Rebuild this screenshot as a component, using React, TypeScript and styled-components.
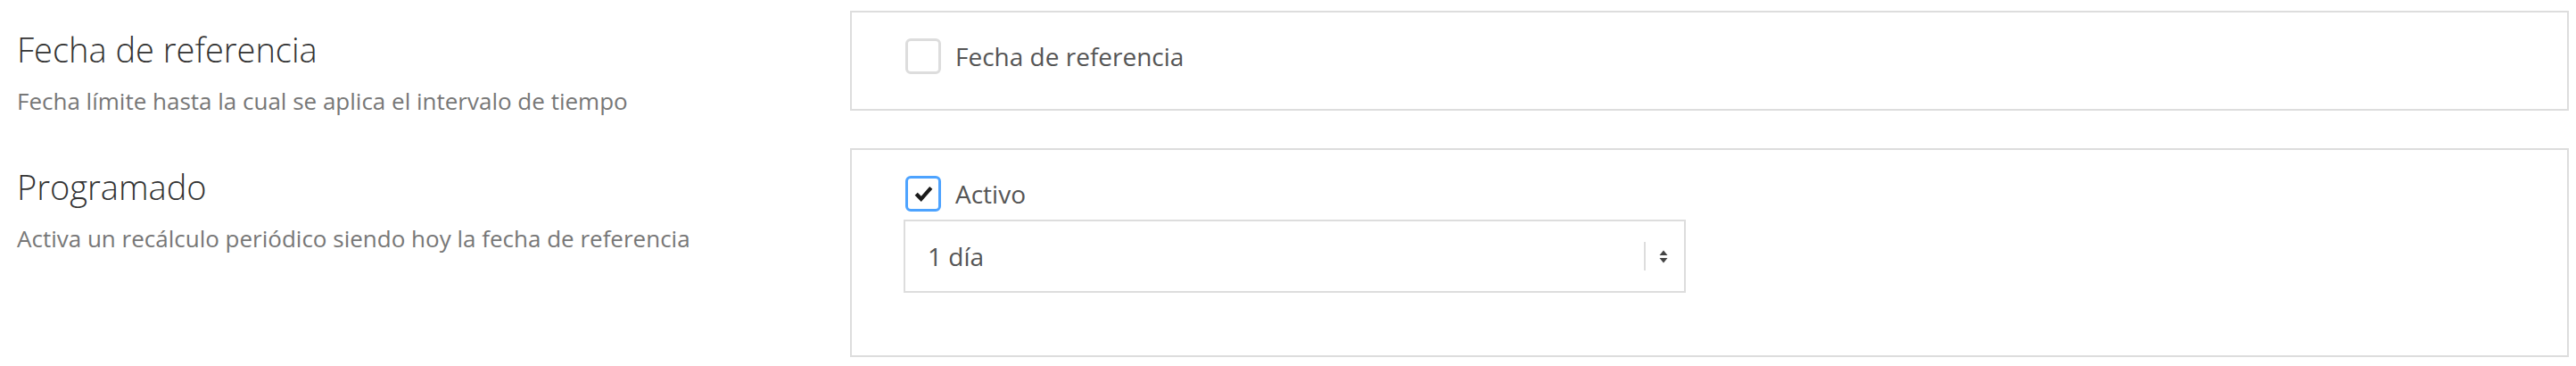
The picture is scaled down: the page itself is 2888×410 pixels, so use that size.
import React from "react";
import styled, { createGlobalStyle } from "styled-components";

const GlobalStyle = createGlobalStyle`
  html, body {
    margin: 0;
    padding: 0;
    background: #ffffff;
  }
  body {
    font-family: "Open Sans", "Noto Sans", sans-serif;
    -webkit-font-smoothing: antialiased;
  }
  * { box-sizing: border-box; }
`;

const Page = styled.div`
  display: flex;
  flex-direction: column;
  gap: 42px;
  padding: 12px 8px 10px 19px;
`;

const SettingRow = styled.section`
  display: grid;
  grid-template-columns: 934px 1fr;
  align-items: start;
`;

const Info = styled.div`
  padding-top: 21px;
`;

const Title = styled.h3`
  margin: 0;
  font-size: 38px;
  line-height: 44px;
  font-weight: 300;
  color: #333333;
`;

const Description = styled.p`
  margin: 26px 0 0;
  font-size: 26px;
  line-height: 20px;
  font-weight: 400;
  color: #777777;
`;

const Panel = styled.div<{ $bottom: number }>`
  border: 2px solid #dddddd;
  padding: 29px 58px ${(p) => p.$bottom}px;
`;

const CheckRow = styled.label`
  display: flex;
  align-items: center;
  gap: 16px;
  height: 40px;
  cursor: pointer;
`;

const CheckBox = styled.span<{ $checked?: boolean }>`
  width: 40px;
  height: 40px;
  margin-left: 2px;
  border: 3px solid ${(p) => (p.$checked ? "#4da3ff" : "#dddddd")};
  border-radius: 6px;
  display: flex;
  align-items: center;
  justify-content: center;
  background: #ffffff;
`;

const CheckText = styled.span`
  font-size: 28px;
  line-height: 40px;
  color: #555555;
`;

const Select = styled.div`
  margin-top: 9px;
  width: 877px;
  height: 82px;
  border: 2px solid #dddddd;
  display: flex;
  align-items: center;
  padding: 0 18px 0 25px;
`;

const SelectValue = styled.span`
  flex: 1;
  font-size: 28px;
  line-height: 40px;
  color: #555555;
`;

const Separator = styled.span`
  width: 2px;
  height: 32px;
  background: #dddddd;
  margin-right: 15px;
`;

const CheckIcon = () => (
  <svg width="21" height="19" viewBox="0 0 20 18" aria-hidden="true">
    <path d="M0.6 10.2 L3.6 7.4 L7.4 11.2 L16.4 0.8 L19.4 3.6 L7.4 17.2 Z" fill="#1a1a1a" />
  </svg>
);

const SortIcon = () => (
  <svg width="10" height="15" viewBox="0 0 10 15" aria-hidden="true">
    <path d="M0.5 6 L5 0.5 L9.5 6 Z" fill="#444444" />
    <path d="M0.5 9 L5 14.5 L9.5 9 Z" fill="#444444" />
  </svg>
);

export default function App() {
  return (
    <>
      <GlobalStyle />
      <Page>
        <SettingRow>
          <Info>
            <Title>Fecha de referencia</Title>
            <Description>Fecha límite hasta la cual se aplica el intervalo de tiempo</Description>
          </Info>
          <Panel $bottom={39}>
            <CheckRow>
              <CheckBox />
              <CheckText>Fecha de referencia</CheckText>
            </CheckRow>
          </Panel>
        </SettingRow>
        <SettingRow>
          <Info>
            <Title>Programado</Title>
            <Description>Activa un recálculo periódico siendo hoy la fecha de referencia</Description>
          </Info>
          <Panel $bottom={70}>
            <CheckRow>
              <CheckBox $checked>
                <CheckIcon />
              </CheckBox>
              <CheckText>Activo</CheckText>
            </CheckRow>
            <Select>
              <SelectValue>1 día</SelectValue>
              <Separator />
              <SortIcon />
            </Select>
          </Panel>
        </SettingRow>
      </Page>
    </>
  );
}
